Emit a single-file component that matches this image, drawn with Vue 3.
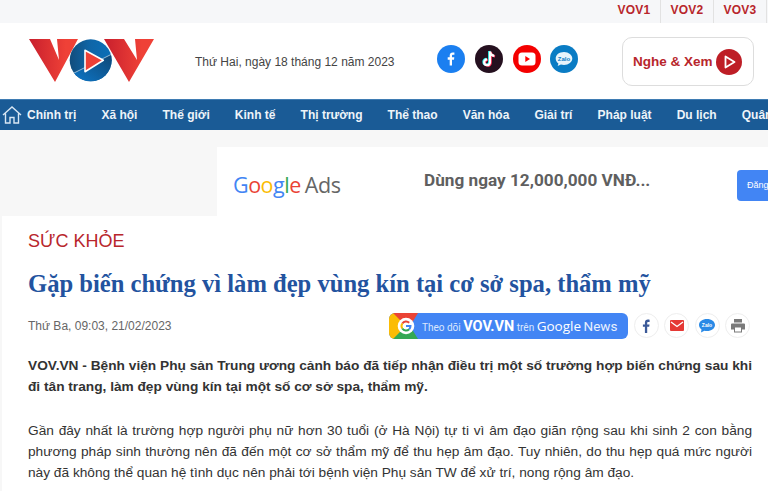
<script setup>
const navItems = ['Chính trị','Xã hội','Thế giới','Kinh tế','Thị trường','Thể thao','Văn hóa','Giải trí','Pháp luật','Du lịch','Quân sự']
</script>

<template>
  <div class="page">
    <div class="topbar">
      <a class="chan">VOV1</a><a class="chan">VOV2</a><a class="chan">VOV3</a>
    </div>
    <header class="head">
      <svg class="logo" width="128" height="46" viewBox="0 0 128 46">
        <defs>
          <linearGradient id="vr" x1="0" x2="1" y1="0" y2="0"><stop offset="0" stop-color="#c81f2d"/><stop offset="0.75" stop-color="#ef4137"/></linearGradient>
          <linearGradient id="blu" x1="0" x2="1" y1="0" y2="0"><stop offset="0" stop-color="#124d7c"/><stop offset=".5" stop-color="#0f66a8"/><stop offset="1" stop-color="#0a6fb8"/></linearGradient>
          <linearGradient id="blu2" x1="0" x2="1" y1="1" y2="0"><stop offset="0.2" stop-color="#0d6fbb"/><stop offset="1" stop-color="#0f4470"/></linearGradient>
          <clipPath id="cc"><circle cx="62.700" cy="22.300" r="21"/></clipPath>
        </defs>
        <path d="M1 1H22L31 22L29 1H50L27 44Z" fill="url(#vr)"/>
        <path d="M76 1H96L109 22L107 1H126L101 44Z" fill="url(#vr)"/>
        <circle cx="62.700" cy="22.300" r="21" fill="url(#blu)"/>
        <g clip-path="url(#cc)">
          <path d="M44 36L86 15V46H44Z" fill="url(#blu2)"/>
          <path d="M44 36L86 15" stroke="#cfe0ee" stroke-width=".7" fill="none"/>
        </g>
        <path d="M57 12.300L75.300 22.300L57 33.700Z" fill="#ee4036" stroke="#fff" stroke-width="1.600" stroke-linejoin="round"/>
      </svg>
      <span class="date">Thứ Hai, ngày 18 tháng 12 năm 2023</span>
      <div class="socials">
        <span class="soc fb"><svg width="28" height="28" viewBox="0 0 28 28"><path d="M15 20.500v-5.800h2l.3-2.400H15v-1.400c0-.7.200-1.200 1.200-1.200h1.200V7.600c-.2 0-.9-.1-1.700-.1-1.800 0-3 1.100-3 3v1.800h-2v2.400h2v5.800z" fill="#fff"/></svg></span>
        <span class="soc tt"><svg width="28" height="28" viewBox="0 0 28 28"><g fill="none" stroke-width="2.200"><path d="M15 6.500v10.800a2.900 2.900 0 1 1-2.900-2.900M15 6.500c.3 2.600 1.900 4.100 4.300 4.300" stroke="#25f4ee" transform="translate(-.8 -.5)"/><path d="M15 6.500v10.800a2.900 2.900 0 1 1-2.900-2.900M15 6.500c.3 2.600 1.900 4.100 4.300 4.300" stroke="#fe2c55" transform="translate(.8 .5)"/><path d="M15 6.500v10.800a2.900 2.900 0 1 1-2.900-2.900M15 6.500c.3 2.600 1.900 4.100 4.300 4.300" stroke="#fff"/></g></svg></span>
        <span class="soc yt"><svg width="28" height="28" viewBox="0 0 28 28"><rect x="5.500" y="7.500" width="17" height="13" rx="3.500" fill="#fff"/><path d="M12.300 11l4.700 3-4.700 3z" fill="#f00"/></svg></span>
        <span class="soc zl"><svg width="28" height="28" viewBox="0 0 28 28"><path d="M14 7c-4.700 0-8.300 2.800-8.300 6.500 0 2 1 3.700 2.700 4.900l-.7 2.600 3.200-1.500c1 .3 2 .4 3.100.4 4.700 0 8.300-2.900 8.300-6.400S18.700 7 14 7z" fill="#e8f4fb"/><text x="14" y="15.800" class="zt">Zalo</text></svg></span>
      </div>
      <a class="listen">
        <span class="listen-t">Nghe &amp; Xem</span>
        <span class="playc"><svg width="26" height="26" viewBox="0 0 26 26"><path d="M9.500 7.500L18.500 13L9.500 18.500Z" fill="none" stroke="#fff" stroke-width="1.800" stroke-linejoin="round"/></svg></span>
      </a>
    </header>
    <nav class="nav">
      <svg class="home" width="20" height="20" viewBox="0 0 20 20"><path d="M1 10L10 2L19 10M3.500 8.500V18H8V12.500H12V18H16.500V8.500" fill="none" stroke="#d7e6f3" stroke-width="1.400"/></svg>
      <a v-for="n in navItems" :key="n" class="navi">{{ n }}</a>
    </nav>
    <div class="adband">
      <div class="ad">
        <div class="gads"><span class="gword"><i class="b">G</i><i class="r">o</i><i class="y">o</i><i class="b">g</i><i class="g">l</i><i class="r">e</i></span> <span class="adsw">Ads</span></div>
        <div class="adtext">Dùng ngay 12,000,000 VNĐ...</div>
        <div class="adbtn">Đăng ký</div>
      </div>
    </div>
    <main class="article">
      <div class="cat">SỨC KHỎE</div>
      <h1 class="title">Gặp biến chứng vì làm đẹp vùng kín tại cơ sở spa, thẩm mỹ</h1>
      <div class="meta">
        <span class="time">Thứ Ba, 09:03, 21/02/2023</span>
        <div class="shares">
          <a class="gnews">
            <svg class="gicon" width="30" height="26" viewBox="0 0 30 26">
              <path d="M0 0H5L17 13L5 26H0Z" fill="#fbbc04"/>
              <path d="M4 0H29L21 13H17Z" fill="#ea4335"/>
              <path d="M4 26H29L21 13H17Z" fill="#34a853"/>
              <circle cx="17" cy="13" r="8.300" fill="#fff"/>
              <g fill="none" stroke-width="2">
                <path d="M13.300 10.500A4.500 4.500 0 0 1 20.200 9.800" stroke="#ea4335"/>
                <path d="M13.300 15.500A4.500 4.500 0 0 1 13.300 10.500" stroke="#fbbc04"/>
                <path d="M13.300 15.500A4.500 4.500 0 0 0 20.200 16.200" stroke="#34a853"/>
                <path d="M20.200 16.200A4.500 4.500 0 0 0 21.500 13H17" stroke="#4285f4"/>
              </g>
            </svg>
            <span class="gt">Theo dõi <b>VOV.VN</b> trên <em>Google</em> <u>News</u></span>
          </a>
          <span class="shr"><svg width="14" height="16" viewBox="0 0 14 16"><path d="M8.200 15V8.800h2l.3-2.400H8.200V5c0-.7.200-1.100 1.200-1.100h1.200V1.700c-.2 0-.9-.1-1.700-.1-1.800 0-3 1-3 3v1.800h-2v2.400h2V15z" fill="#3b5998"/></svg></span>
          <span class="shr"><svg width="14" height="12" viewBox="0 0 14 12"><rect width="14" height="11" rx="1" fill="#e53935"/><path d="M1 2L7 6.500L13 2" fill="none" stroke="#fff" stroke-width="1.300"/></svg></span>
          <span class="shr"><svg width="18" height="16" viewBox="0 0 18 16"><path d="M9 1C4.500 1 1 3.500 1 7c0 1.900 1 3.400 2.500 4.400L3 14.500l3.400-1.800c.8.200 1.700.3 2.600.3 4.500 0 8-2.600 8-6s-3.500-6-8-6z" fill="#2a8ae6"/><text x="9" y="9" class="zt2">Zalo</text></svg></span>
          <span class="shr"><svg width="14" height="14" viewBox="0 0 14 14"><path d="M3 0H11V3.500H3ZM1 4.500H13A1 1 0 0 1 14 5.500V10.500H11V13.500H3V10.500H0V5.500A1 1 0 0 1 1 4.500Z" fill="#7a7a7a"/><rect x="4" y="8.500" width="6" height="4" fill="#fff"/></svg></span>
        </div>
      </div>
      <p class="lede">VOV.VN - Bệnh viện Phụ sản Trung ương cảnh báo đã tiếp nhận điều trị một số trường hợp biến chứng sau khi đi tân trang, làm đẹp vùng kín tại một số cơ sở spa, thẩm mỹ.</p>
      <p class="body">Gần đây nhất là trường hợp người phụ nữ hơn 30 tuổi (ở Hà Nội) tự ti vì âm đạo giãn rộng sau khi sinh 2 con bằng phương pháp sinh thường nên đã đến một cơ sở thẩm mỹ để thu hẹp âm đạo. Tuy nhiên, do thu hẹp quá mức người này đã không thể quan hệ tình dục nên phải tới bệnh viện Phụ sản TW để xử trí, nong rộng âm đạo.</p>
    </main>
  </div>
</template>

<style>
html, body { margin: 0; overflow: hidden; background: #fff; }
</style>

<style scoped>
.page { width: 768px; height: 491px; overflow: hidden; font-family: "Liberation Sans", Arial, sans-serif; color: #333; background: #f7f7f7; }
.topbar { height: 23px; background: #f6f7f9; display: flex; justify-content: flex-end; }
.chan { width: 53px; box-sizing: border-box; font-size: 12px; font-weight: 700; color: #b8262c; line-height: 21px; text-align: center; border-right: 1px solid #e2e2e2; letter-spacing: .2px; }
.chan:last-child { margin-right: 1px; }
.head { height: 76px; background: #fff; display: flex; align-items: center; }
.logo { margin-left: 28px; flex: none; }
.date { margin-left: 39px; font-size: 12px; color: #444; margin-top: 1px; width: 203px; white-space: nowrap; }
.socials { display: flex; margin-left: 39px; margin-top: -5px; }
.soc { width: 28px; height: 28px; border-radius: 50%; display: block; margin-right: 10px; }
.soc svg { display: block; }
.soc.fb { background: #1b7ff0; }
.soc.tt { background: #25101f; }
.soc.yt { background: #f40000; margin-right: 8.500px; }
.soc.zl { background: #0a7cc4; margin-right: 0; }
.zt { font: 700 6px "Liberation Sans", sans-serif; fill: #0a7cc4; text-anchor: middle; }
.listen { margin-left: 44px; width: 132px; height: 49px; box-sizing: border-box; border: 1px solid #ddd; border-radius: 10px; display: flex; align-items: center; padding-left: 10.500px; margin-top: 1px; flex: none; }
.listen-t { font-size: 13.500px; font-weight: 700; color: #b8262c; white-space: nowrap; }
.playc { width: 26px; height: 26px; border-radius: 50%; background: #be1e26; margin-left: 3px; display: block; flex: none; }
.playc svg { display: block; }
.nav { height: 31px; box-sizing: border-box; background: #1a5b96; border-top: 1px solid #3f7cb3; display: flex; align-items: center; color: #fff; white-space: nowrap; }
.home { margin-left: 2px; flex: none; margin-right: 5px; }
.navi { font-size: 12px; font-weight: 700; color: #eef4f9; margin-right: 25.100px; }
.adband { height: 86px; box-sizing: border-box; padding: 17px 0 0 217px; background: #f7f7f7; }
.ad { height: 69px; background: #fff; display: flex; width: 551px; align-items: center; overflow: hidden; }
.gads { margin-left: 16px; font-size: 21.500px; width: 191px; flex: none; white-space: nowrap; display: flex; gap: 4px; margin-top: 5px; }
.gword { font-family: "Open Sans", sans-serif; font-weight: 500; letter-spacing: -.5px; }
.gword i { font-style: normal; }
.b { color: #4285f4; } .r { color: #ea4335; } .y { color: #fbbc05; } .g { color: #34a853; }
.adsw { color: #666; font-family: "Open Sans", sans-serif; letter-spacing: -.4px; }
.adtext { font-size: 17.200px; font-weight: 700; color: #5f5f5f; font-family: Roboto, sans-serif; width: 313px; flex: none; white-space: nowrap; margin-top: -4px; }
.adbtn { width: 60px; height: 31px; margin-top: 8px; background: #4285f4; border-radius: 4px; color: #fff; font-size: 9px; line-height: 31px; padding-left: 10px; flex: none; white-space: nowrap; }
.article { background: #fff; margin-left: 2px; padding: 15px 16px 0 26px; height: 275px; box-sizing: border-box; }
.cat { font-size: 18px; line-height: 20px; color: #b8262c; }
.title { font-family: "Liberation Serif", serif; font-weight: 700; font-size: 24.600px; line-height: 32px; color: #23539f; margin: 17px 0 0; white-space: nowrap; }
.meta { display: flex; align-items: center; justify-content: space-between; margin-top: 12px; height: 28px; }
.time { font-size: 12px; color: #666; }
.shares { display: flex; align-items: center; margin-right: 2px; margin-top: -1px; }
.gnews { width: 239px; height: 26px; border-radius: 6px; overflow: hidden; background: #4285f4; display: flex; align-items: center; white-space: nowrap; }
.gicon { display: block; flex: none; }
.gt { margin-left: 3px; font: 10px Roboto, sans-serif; color: #dbe7fd; }
.gt b { font: 700 14.500px Roboto, sans-serif; color: #fff; }
.gt em { font: 500 13.500px "Open Sans", sans-serif; color: #fff; font-style: normal; }
.gt u { font: 13.500px Roboto, sans-serif; color: #e8f0fe; text-decoration: none; }
.shr { width: 25px; height: 25px; border-radius: 50%; border: 1px solid #eee; box-sizing: border-box; display: flex; align-items: center; justify-content: center; margin-left: 5.500px; flex: none; }
.zt2 { font: 700 5px "Liberation Sans", sans-serif; fill: #fff; text-anchor: middle; }
.lede { margin: 15px 0 0; font-size: 13.700px; font-weight: 700; line-height: 21px; color: #333; text-align: justify; }
.body { margin: 23px 0 0; font-size: 13.700px; line-height: 21px; color: #333; text-align: justify; }
</style>
